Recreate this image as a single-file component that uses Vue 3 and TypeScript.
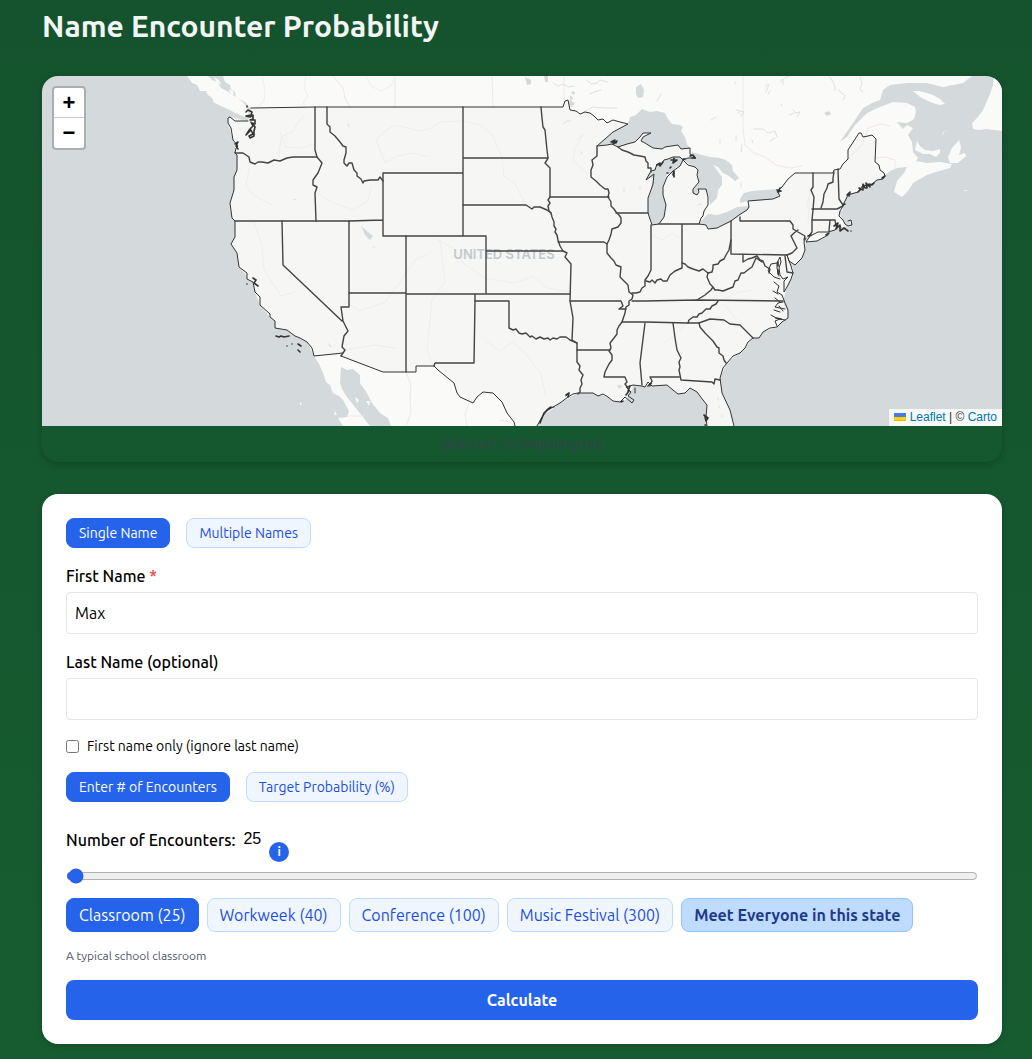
<script setup lang="ts">
import { computed, ref } from 'vue'

interface Preset {
  label: string
  count: number
  hint: string
}

const presets: Preset[] = [
  { label: 'Classroom', count: 25, hint: 'A typical school classroom' },
  { label: 'Workweek', count: 40, hint: 'People met during a working week' },
  { label: 'Conference', count: 100, hint: 'A mid-sized conference' },
  { label: 'Music Festival', count: 300, hint: 'A busy music festival' },
]

const nameMode = ref<'single' | 'multiple'>('single')
const inputMode = ref<'count' | 'target'>('count')
const firstName = ref('Max')
const lastName = ref('')
const firstOnly = ref(false)
const encounters = ref(25)

const hint = computed(() => presets.find((p) => p.count === encounters.value)?.hint ?? 'Custom number of encounters')

/* Base map geometry, drawn on a 960 x 350 view whose origin is 42,76. */
const land: string[] = [
  // mainland, clockwise from the British Columbia coast
  'M223 76L225 82 230 85 231 89 235 92 236 98 241 100 245 102 249 107 251 108 253 118 248 121 235 121 230 117 228 118 228 123 231 128 233 140 236 144 235 153 237 155 237 170 234 177 234 190 230 203 232 218 235 221 235 237 231 244 237 253 239 267 247 273 247 279 253 282 255 292 260 297 260 305 270 317 275 321 275 328 287 330 295 336 300 338 307 342 312 348 314 356 319 364 323 373 326 382 330 385 333 393 339 396 343 400 349 411 347 417 338 418 343 426L370 426 363 417 355 407 347 397 342 389 340 383 341 367 347 370 353 369 360 375 360 383 367 393 372 403 380 413 388 418 391 426L537 426 542 417 548 410 560 403 568 397 578 393 593 393 598 396 603 394 608 397 613 401 620 402 627 399 628 395 632 390 633 385 642 386 652 386 667 385 673 390 678 394 685 393 690 388 697 392 703 400 707 405 706 417 707 426L734 426 730 410 722 393 720 378 723 368 727 363 733 356 745 348 748 342 753 338 759 338 763 332 770 328 777 327 788 318 787 310 783 302 782 295 777 293 780 290 774 282 780 278 769 273 777 263 780 257 780 273 783 280 782 292 786 290 790 280 793 273 793 268 788 262 787 255 795 265 802 258 805 250 805 244 803 240 808 236 818 231 830 230 835 228 840 227 846 226 840 217 839 212 843 210 843 205 843 200 848 193 858 192 863 185 868 185 877 180 883 178 885 175 890 171 897 168 907 167 904 173 897 181 894 192 902 197 908 191 913 183 927 175 936 172 950 168 952 164 940 162 927 163 916 161 918 158 913 152 912 142 908 135 913 128 907 125 903 129 897 122 907 123 914 119 916 112 915 107 907 103 893 102 880 107 867 113 855 125 847 137 840 142 846 133 855 120 863 108 872 103 880 100 883 90 890 85 907 83 927 83 943 87 963 83 972 76Z',
  // Vancouver Island
  'M187 76L192 83 197 85 200 91 206 91 208 95 213 99 213 102 219 105 223 107 230 110 235 113 245 117 249 115 247 108 243 102 233 95 227 91 221 88 217 82 212 80 208 76Z',
  // small islands between Vancouver Island and the mainland
  'M214 77L219 80 221 85 217 83Z M229 89L233 91 234 95 230 93Z',
  // Anticosti
  'M913 91L919 91 927 93 933 95 940 99 945 104 939 105 933 103 926 100 920 97Z',
  // Prince Edward Island
  'M917 141L920 146 925 150 933 151 940 149 940 153 936 157 930 154 923 154 915 150 916 145Z',
  // Cape Breton
  'M959 140L952 148 948 157 950 163 958 163 966 156 965 153 959 155 961 148 960 143Z',
  // Newfoundland
  'M994 76L993 85 990 94 987 101 983 110 978 117 972 123 973 129 979 130 986 129 1002 131V76Z',
  // Magdalen Islands and Sable Island
  'M942 137L943 132 948 130 944 132Z M963 190L968 190 966 191Z',
  // Baja islands
  'M355 397L359 400 357 403Z M366 401L370 401 369 406Z M335 411L337 415 334 415Z M300 402L302 404 300 405Z',
  // Long Island and Cape Cod
  'M807 239L815 235 829 232 825 237 817 241 806 242Z M846 226L852 225 850 220 851 227Z',
]

const usFill =
  'M251 108L315 107H541L563 107 565 101 568 100 570 110 580 113 590 113 598 120 607 123 613 120 628 124 613 132 597 146 612 144 618 147 635 142 640 137 648 133 643 142 653 148 662 149 678 145 690 148 692 156 684 160 698 168 699 182 693 192 697 195 699 189 706 189 709 205 699 223 708 229 717 228 731 221 743 213 748 208 748 201 773 199 780 196 778 189 795 173H833L840 169 848 159 848 150 859 133 863 137 872 135 876 139 875 162 879 165 885 175 883 178 863 187 848 193 843 205 839 212 846 226 828 232 806 238 805 250 795 265 788 262 793 273 786 290 783 302 788 318 777 327 763 332 759 338 753 338 745 348 727 363 720 378 722 393 730 410 734 426H707L706 417 707 405 697 392 690 388 678 394 667 385 633 385 628 395 620 402 608 397 593 393 578 393 560 403 542 417 537 426H515L514 422 507 413 502 402 493 393 483 392 477 397 473 403 457 393 454 383 434 366H416V372H383L341 356 314 356 307 342 287 330 275 328 275 321 260 305 255 292 253 282 239 267 237 253 231 244 235 237 235 221 230 203 234 190 234 177 237 170 237 155 233 140 228 123 230 117 248 121Z'

const lakes: string[] = [
  // Superior
  'M597 146L606 138 613 132 628 124 630 117 636 115 642 109 650 112 657 111 665 113 668 119 672 124 680 125 683 127 681 131 685 137 687 144 690 148 681 149 678 145 665 147 662 149 653 148 645 143 641 142 642 138 650 133 643 133 640 137 635 142 618 147 612 144Z',
  // Michigan
  'M659 224L652 225 648 213 648 198 651 190 653 178 650 178 646 180 648 174 652 172 657 164 660 166 664 160 668 159 674 157 680 157 684 160 680 166 675 168 673 174 667 174 663 187 663 195 666 205 664 217Z',
  // Huron and Georgian Bay
  'M683 160L690 157 692 152 702 155 710 157 720 158 726 160 732 165 733 171 739 178 735 181 729 176 723 173 718 167 713 165 722 177 722 185 718 190 717 198 710 205 708 193 705 188 699 189 697 195 693 193 693 189 699 182 697 168 690 164Z',
  // Erie
  'M699 223L704 218 708 214 717 215 727 212 737 207 749 206 748 210 743 213 732 221 717 228 708 229 706 225Z',
  // Ontario
  'M740 199L744 193 752 191 765 190 777 189 780 193 778 197 771 199 757 201 748 201 740 203Z',
  // Nipigon, Lake of the Woods, Salton Sea, Great Salt Lake and the small northern lakes
  'M636 87L641 84 644 90 643 97 638 98 636 94Z M525 77L531 80 531 84 527 85Z M544 76H548V82H545Z M327 342L332 347 330 347Z M361 226L368 232 373 236 370 240 365 235Z',
  'M570 95L573 98 571 101 575 103 572 107 568 104 570 100Z M573 91L575 92 574 95 571 93Z M617 385L623 386 619 389Z M824 113L829 111 831 114 827 116Z',
]

/* Ponds and short lake chains, too small to fill as shapes of their own. */
const ponds: string[] = [
  'M563 124L567 121 571 121 M581 152L582 154 M348 124L349 127 M293 200L296 199 M698 205L701 204 M624 188V191 M640 187V190 M373 247H375',
  'M553 83L558 86 563 84 568 87 574 86 M586 80L592 84 597 83 600 80 608 82 M590 94L594 92 601 90 M584 112L592 107 605 108 617 108',
  'M789 115L794 113 800 112 797 117 M793 110L796 113 M765 86L769 84 766 92 M770 91L768 94 M780 82L783 79 783 85 M785 78L789 76 M842 93L845 96 843 100 M839 90L841 93 M830 77L834 84 835 90 M860 77L862 83 860 90 863 92 M735 82V84 M736 110L744 112 741 116 M738 112L740 114 M781 104L782 106 M754 129L763 129 768 133 775 131 777 137 M770 141L775 138 M742 145L741 152 M752 140L753 143 M720 139V144 M736 136V141 M711 120L716 117 M741 183V187 M657 101L661 94',
  'M678 398V400 M718 398V400 M719 406V408 M722 415V417',
]

const rivers: string[] = [
  'M262 76L265 90 264 101 257 107 M306 76L304 88 308 96 303 103 306 107',
  'M366 76L371 86 381 91 391 86 394 79',
  'M430 157L413 153 397 156 385 163 376 140 385 131 395 125 420 131 431 128 440 122 463 121 480 125 492 134 502 158 504 176 515 184 526 205',
  'M279 157L281 137 292 132 303 116 M280 132L285 147 302 148 313 144',
  'M250 164L246 185 253 195 272 205 M317 193L333 203 353 210 368 201 371 186',
  'M254 222L262 245 264 270 281 296 295 292',
  'M430 253L416 259 400 282 385 302 360 311 345 302 M345 350L375 345 396 348',
  'M438 240L455 249 463 263 485 278 515 283 533 276 547 288 571 292',
  'M440 240L445 282 432 300 427 350 434 366',
  'M486 341L499 351 513 342 527 355 541 374 546 397',
  'M576 140L583 134 575 148 573 160 588 174',
  'M651 235L662 240 673 233 682 240 M690 320L678 332 665 343',
  'M807 207L810 190 808 225 M753 290L735 293 716 304 M725 305L735 318 742 324',
]

const provinces: string[] = [
  'M333 76L343 88 345 98 350 107 M395 76V107 M492 76L493 107 M564 76V99',
  'M743 76V128L745 145 754 153 765 157 776 165 790 168 802 166',
  'M848 159L862 145 868 128 880 124 890 126 M876 158L885 157 895 160 895 168',
  'M406 372L411 385 410 400 411 413 406 426 M347 416H364 M469 403L465 415 467 426 M500 420L509 422 514 426',
]

const coast: string[] = [
  'M251 108L315 107H541L563 107 565 101 568 100 570 110 576 111 580 114 585 112 590 113 594 116 598 120 603 119 607 123 613 120 620 122 628 124 613 132 597 146 607 145 612 144 618 147 627 144 635 142 640 137 643 133 651 133 643 137 641 141 645 143 653 148 662 149 665 147 678 145 681 149 690 148 690 154 696 158 688 158 683 160 680 157 673 157 668 159 664 160 660 166 657 164 655 170 651 171 646 180 654 174 653 184 651 190 648 198 648 213 652 225 659 224 664 217 666 205 663 195 663 187 667 177 673 171 680 166 683 160 688 165 695 167 698 170 697 175 699 182 693 189 693 193 697 195 699 192 698 189 706 189 708 197 708 205 704 211 703 216 701 218 699 224 706 225 708 229 717 228 731 221 739 215 747 210 749 207 748 201 760 200 773 199 780 196 777 191 782 187 788 179 795 173H833L834 170 840 169 843 164 848 159 848 150 859 133 861 133 863 137 868 136 872 135 876 139 875 162 879 165 880 170 884 173 885 176 883 179 877 180 872 184 868 186 863 185 858 192 848 195 843 205 842 208 840 211 839 216 843 220 845 224 848 226 852 225 851 220 848 221',
  'M841 227L838 226 835 230 828 232 818 232 810 236 806 242 817 241 828 235 M806 238L804 242 805 250 802 258 795 265 789 261 787 255',
  'M788 258L791 266 793 273 791 279 787 287 784 292 784 281 788 277 783 279 780 275 779 268 781 262 780 257 777 263 777 268 779 276 M777 263L771 264 768 271 774 277 780 279 M774 282L779 286 777 292 782 295 785 303 788 310 788 318 782 322 777 327 770 328 763 332 759 338 753 338 748 342 745 348 740 353 733 356 727 363 723 368 720 378 722 393 730 410 734 426',
  'M783 302L778 303 775 307 785 309 M783 311L779 306 M776 318L771 315 M777 326L775 321 780 319 785 320 M774 310L780 312 M773 291L778 294 M775 298L780 302',
  'M707 426L706 417 707 405 703 400 697 392 690 388 685 393 678 394 673 390 667 385 652 386 648 382 645 387 642 386 633 385 626 387 631 392 628 396 634 400 632 403 625 397 620 402 613 401 608 397 603 394 598 396 593 393 578 393 573 394 568 397 560 403 548 410 542 417 537 426 M635 388V393 M566 396L569 393 M545 412L549 408 554 407',
  'M515 426L514 422 507 413 502 402 493 393 483 392 477 397 473 403 460 397 457 393 454 383 438 370 434 366H416V372H383L341 356 M343 353L314 356 312 348 307 342 300 338 295 336 287 330 275 328 275 321 270 317 270 314 260 305 260 297 255 292 253 282 247 279 247 273 239 267 237 253 231 244 235 237 235 221 232 218 230 203 234 190 234 177 237 170 237 155 235 153 236 148 238 146 233 140 231 128 228 123 228 118 230 117 235 121 248 121',
]

const borders: string[] = [
  'M315 107V150L317 157 322 163 318 173 313 180 313 185 317 187 315 193 316 221',
  'M235 153L243 153 249 157 250 162 255 164 258 162 262 162 268 163 274 160 280 161 287 158 293 157H317',
  'M327 107V124L330 127 330 132 335 136 340 142 343 146 346 147 346 153 344 160 344 163 347 166 349 163 352 163 354 170 357 173 357 176 361 179 363 183 364 181 370 180 378 180 380 177 383 181',
  'M463 173H383V236H463 M235 221H349L383 220 M463 107V236H486V293 M463 158H548',
  'M282 221L283 265 342 321 M349 221V307H341L343 321 348 331 344 336 342 347 345 350 343 353 341 356',
  'M406 236V372 M349 293H406 M406 294H570 M475 294V301L474 363H435L434 366',
  'M541 107L542 118 543 127 545 130 546 140 547 150 548 158 547 160 545 163 549 167 550 168 550 197 548 200 550 203 548 206 549 211 551 213',
  'M463 205H526L532 209 534 207 540 207 547 210 551 213 552 217 554 222 554 226 556 229 555 232 557 235 558 240 560 246 563 251 567 253 565 257 571 264 570 301 573 318 572 340 577 343V349L577 362 580 366 579 370 583 375 581 380 582 384 580 388 580 392 578 394',
  'M487 251H563 M550 197H609 M558 242H604L607 244 M616 213H648',
  'M597 146L597 156 592 160 593 165 591 170 591 177 596 181 600 185 605 189 608 189 609 193 608 197 611 202 611 206 614 209 616 212 619 215 621 218 621 223 618 227 612 229 611 234 609 240 607 244 607 253 611 258 614 261 616 265 621 267 620 277 624 281 628 285 629 292 633 295 632 299 629 301 629 305 626 307 625 313 622 322 619 326 617 330 617 334 614 338 610 343 611 348 609 351 612 355 612 360 609 364 607 368 605 372 604 377H625L627 382 625 384 628 388',
  'M618 147L622 150 628 152 634 155 640 156 645 157 646 161 648 163 648 168 651 168 651 172',
  'M475 301H509V328L513 330 516 329 519 333 522 334 526 333 530 337 532 336 536 339 540 337 544 339 548 338 550 340 553 338 557 339 560 337 566 337 570 340 577 343 M577 350H610',
  'M570 301H621L623 306 619 309 626 309 M632 301H645L697 300 783 301 M622 322H645L688 323 699 323 710 319 724 320 730 324 740 325 753 338',
  'M718 301L716 304 712 306 710 309 706 309 702 313 699 314 697 317 693 317 689 320 688 323',
  'M645 323L640 363 642 385 M673 323L675 338 677 350 681 358 679 362 680 367 679 370 681 380 712 382 714 384 715 379 720 380 M679 377H650L652 381 650 386',
  'M699 323L700 327 705 333 710 338 713 341 717 347 719 348 719 353 723 356 724 360 726 363',
  'M651 225V270L648 276 645 280 645 286 642 288 640 292 636 293 632 293 M646 281L650 282 652 280 655 283 657 280 661 279 663 281 667 281 670 275 675 271 682 268V225 M659 224H699',
  'M682 263L685 264 688 267 693 269 699 271 703 269 708 273 712 272 713 268 713 265 718 264 720 261 724 259 726 255 729 250 731 240V221',
  'M708 273L707 277 710 284 713 287 711 290 705 295 697 300 M713 287L715 290 718 290 723 291 728 289 733 287 735 281 738 280 741 273 744 273 749 269 752 267 756 258 762 262',
  'M731 240V254L787 255 M743 255V262L748 259 752 258 757 256 760 260 763 261 765 266 770 269 769 273',
  'M785 256L787 272 793 273 M740 217V221H790L793 225 793 229 798 232 805 236 804 240 M798 230L794 233 791 236 793 240 797 248 792 253 787 255',
  'M813 173V187L811 190 814 197 813 210 812 220 812 232 809 236 M834 172L833 178 833 182 828 184 827 188 824 194 823 202 821 208 M838 169L839 199 843 205',
  'M812 209H837L843 206 M812 220H835L836 226 M830 220L829 231',
]

/* Dense island and inlet shorelines that read as dark clusters at this zoom level. */
const inlets: string[] = [
  'M246 112L248 110 252 112 251 115 246 116 250 117 253 115 253 119 250 120 255 120 255 124 252 123 255 127 254 131 254 136 250 138 249 136 253 134 251 130 249 132 246 135 250 129 253 126 251 122',
  'M235 144L238 142 236 146 238 149 M247 106V107',
  'M253 278L256 280 254 283 258 286 M247 284V284 M276 336L279 337 281 336 284 337 289 336 M287 346V346 M292 344V344 M298 344L301 346 M298 350L300 352',
  'M847 195L850 192 849 196 M858 192L861 189 859 188 863 190 863 184 865 188 867 188 866 183 870 187 869 184 872 185 874 183 M834 226L838 223 836 229 840 225 840 231 844 228 848 231 M851 231V231 M826 235L829 233 M843 205L845 204 M808 236L811 235 M882 178L885 176',
  'M611 142L615 140 613 144 617 141 616 143 612 142',
  'M657 165L660 163 660 166 663 162 M671 160L677 160 673 163 674 158 M670 168L671 167 M673 175L674 171 674 177 M690 156L693 155 695 158 692 158 M667 173H668 M683 159H685',
  'M777 190L781 191 778 192 780 188 M704 415L708 418 706 421 705 417 M566 395L569 393 568 397 M540 423L544 413 546 411 M551 407L547 410 M621 402L623 401 M629 391L626 395 M630 386L628 391 M648 386L651 383 M706 425H705',
  'M778 262V266 M778 270V274 M776 318L781 319',
]
</script>

<template>
  <main class="page">
    <h1 class="title">Name Encounter Probability</h1>

    <section class="map-card" aria-label="State map">
      <div class="map">
        <svg class="tiles" viewBox="42 76 960 350" preserveAspectRatio="xMidYMid slice" role="img" aria-label="Map of the United States">
          <g class="land"><path v-for="d in land" :key="d" :d="d" /></g>
          <path class="us" :d="usFill" />
          <g class="rivers"><path v-for="d in rivers" :key="d" :d="d" /></g>
          <g class="provinces"><path v-for="d in provinces" :key="d" :d="d" /></g>
          <g class="lakes"><path v-for="d in lakes" :key="d" :d="d" /></g>
          <g class="ponds"><path v-for="d in ponds" :key="d" :d="d" /></g>
          <text class="country" x="504" y="259" text-anchor="middle">UNITED STATES</text>
          <g class="coast"><path v-for="d in coast" :key="d" :d="d" /></g>
          <g class="borders"><path v-for="d in borders" :key="d" :d="d" /></g>
          <g class="inlets"><path v-for="d in inlets" :key="d" :d="d" /></g>
        </svg>

        <div class="zoom">
          <button type="button" aria-label="Zoom in">+</button>
          <button type="button" aria-label="Zoom out">−</button>
        </div>

        <div class="attribution">
          <svg class="flag" width="12" height="8" viewBox="0 0 12 8" aria-hidden="true">
            <path fill="#4c7be1" d="M0 0h12v4H0z" />
            <path fill="#ffd500" d="M0 4h12v3H0z" />
            <path fill="#e0bc00" d="M0 7h12v1H0z" />
          </svg>
          <a href="#">Leaflet</a> <span class="bar">|</span> © <a href="#">Carto</a>
        </div>
      </div>
      <p class="selected">Selected: 53 (Washington)</p>
    </section>

    <form class="form-card" @submit.prevent>
      <div class="tabs">
        <button type="button" class="chip" :class="{ active: nameMode === 'single' }" @click="nameMode = 'single'">Single Name</button>
        <button type="button" class="chip" :class="{ active: nameMode === 'multiple' }" @click="nameMode = 'multiple'">Multiple Names</button>
      </div>

      <div class="field">
        <label for="first-name">First Name <span class="required">*</span></label>
        <input id="first-name" v-model="firstName" type="text" required />
      </div>

      <div class="field">
        <label for="last-name">Last Name (optional)</label>
        <input id="last-name" v-model="lastName" type="text" />
      </div>

      <label class="check">
        <input v-model="firstOnly" type="checkbox" />
        <span>First name only (ignore last name)</span>
      </label>

      <div class="tabs">
        <button type="button" class="chip" :class="{ active: inputMode === 'count' }" @click="inputMode = 'count'">Enter # of Encounters</button>
        <button type="button" class="chip" :class="{ active: inputMode === 'target' }" @click="inputMode = 'target'">Target Probability (%)</button>
      </div>

      <div class="count-row">
        <label for="encounters">Number of Encounters:</label>
        <output for="encounters">{{ encounters }}</output>
        <button type="button" class="info" aria-label="About encounters">i</button>
      </div>
      <input id="encounters" v-model.number="encounters" class="slider" type="range" min="1" max="10000" />

      <div class="presets">
        <button
          v-for="preset in presets"
          :key="preset.label"
          type="button"
          class="chip large"
          :class="{ active: preset.count === encounters }"
          @click="encounters = preset.count"
        >
          {{ preset.label }} ({{ preset.count }})
        </button>
        <button type="button" class="chip large everyone">Meet Everyone in this state</button>
      </div>

      <p class="hint">{{ hint }}</p>
      <button type="submit" class="submit">Calculate</button>
    </form>
  </main>
</template>

<style>
body {
  margin: 0;
  background: #14532d;
}
</style>

<style scoped>
* {
  box-sizing: border-box;
}

.page {
  min-height: 100vh;
  padding: 8px 30px 15px 42px;
  background: linear-gradient(#14532d, #175c31);
  color: #000;
  font-family: Ubuntu, "Noto Sans", sans-serif;
  font-size: 16px;
  line-height: 24px;
}

button,
input {
  margin: 0;
  font-family: inherit;
}

button {
  cursor: pointer;
}

.title {
  margin: 0 0 32px;
  color: #f3f4f6;
  font-size: 30px;
  font-weight: 600;
  line-height: 36px;
}

.map-card {
  overflow: hidden;
  margin-bottom: 32px;
  border-radius: 16px;
  background: #15572e;
  box-shadow: 0 2px 6px rgba(0, 0, 0, 0.2);
}

.map {
  position: relative;
  height: 350px;
  background: #d4dadc;
}

.tiles {
  display: block;
  width: 100%;
  height: 100%;
}

.tiles path {
  stroke-linejoin: round;
  stroke-linecap: round;
}

.land {
  fill: #fafaf8;
}

.us {
  fill: #f6f6f5;
}

.lakes {
  fill: #d4dadc;
}

.ponds {
  fill: none;
  stroke: #dde2e3;
}

.rivers {
  fill: none;
  stroke: #eceeef;
}

.provinces {
  fill: none;
  stroke: #f3e6e8;
}

.country {
  fill: #c3c9ce;
  font-family: Inter, sans-serif;
  font-size: 13px;
  font-weight: 600;
}

.coast,
.borders,
.inlets {
  fill: none;
  stroke: #333;
}

.borders {
  stroke: #444;
  stroke-width: 1.4;
}

.inlets {
  stroke-width: 1.6;
}

.zoom {
  position: absolute;
  top: 10px;
  left: 10px;
  display: flex;
  flex-direction: column;
  border: 2px solid rgba(0, 0, 0, 0.2);
  border-radius: 4px;
  background: #fff;
  background-clip: padding-box;
}

.zoom button {
  width: 30px;
  height: 30px;
  padding: 0;
  border: 0;
  background: transparent;
  color: #000;
  font: bold 22px/30px "Liberation Sans", sans-serif;
}

.zoom button:first-child {
  border-bottom: 1px solid #ccc;
}

.attribution {
  position: absolute;
  right: 0;
  bottom: 0;
  padding: 0 5px;
  background: rgba(255, 255, 255, 0.8);
  color: #333;
  font: 12px/17px "Liberation Sans", Arial, sans-serif;
}

.flag {
  margin-right: 4px;
}

.attribution a {
  color: #0078a8;
  text-decoration: none;
}

.selected {
  margin: 0;
  padding: 8px;
  color: #374151;
  font-size: 14px;
  line-height: 20px;
  text-align: center;
}

.form-card {
  display: flex;
  flex-direction: column;
  padding: 24px;
  border-radius: 16px;
  background: #fff;
  box-shadow: 0 2px 6px rgba(0, 0, 0, 0.2);
}

.tabs {
  display: flex;
  gap: 16px;
  margin-bottom: 16px;
}

.chip {
  padding: 4px 12px;
  border: 1px solid #bfdbfe;
  border-radius: 8px;
  background: #eff6ff;
  color: #1d4ed8;
  font-size: 14px;
  line-height: 20px;
}

.chip.large {
  font-size: 16px;
  line-height: 24px;
}

.chip.active {
  border-color: #2563eb;
  background: #2563eb;
  color: #fff;
}

.chip.everyone {
  border-color: #93c5fd;
  background: #bfdbfe;
  color: #1e3a8a;
  font-weight: 600;
}

.field {
  display: flex;
  flex-direction: column;
  gap: 4px;
  margin-bottom: 16px;
}

.field label,
.count-row label {
  font-weight: 500;
}

.required {
  color: #ef4444;
}

.field input {
  width: 100%;
  height: 42px;
  padding: 8px;
  border: 1px solid #e5e7eb;
  border-radius: 4px;
  background: #fff;
  color: #000;
  font-size: 16px;
}

.check {
  display: flex;
  align-items: center;
  gap: 8px;
  margin-bottom: 16px;
  font-size: 14px;
  line-height: 20px;
}

.check input {
  width: 13px;
  height: 13px;
}

.count-row {
  display: flex;
  gap: 8px;
  height: 36px;
  margin: 8px 0 6px;
  line-height: 28px;
}

.count-row output {
  font-family: "Liberation Sans", Arial, sans-serif;
  font-size: 16px;
  line-height: 26px;
}

.info {
  align-self: flex-end;
  width: 20px;
  height: 20px;
  padding: 0;
  border: 0;
  border-radius: 50%;
  background: #2563eb;
  color: #fff;
  font-size: 12px;
  font-weight: 700;
  line-height: 20px;
}

.slider {
  width: 100%;
  height: 16px;
  margin: 0 0 14px;
  accent-color: #2563eb;
}

.presets {
  display: flex;
  flex-wrap: wrap;
  gap: 8px;
}

.hint {
  margin: 16px 0;
  color: #4b5563;
  font-size: 12px;
  line-height: 16px;
}

.submit {
  height: 40px;
  border: 0;
  border-radius: 8px;
  background: #2563eb;
  color: #fff;
  font-size: 16px;
  font-weight: 600;
}
</style>
